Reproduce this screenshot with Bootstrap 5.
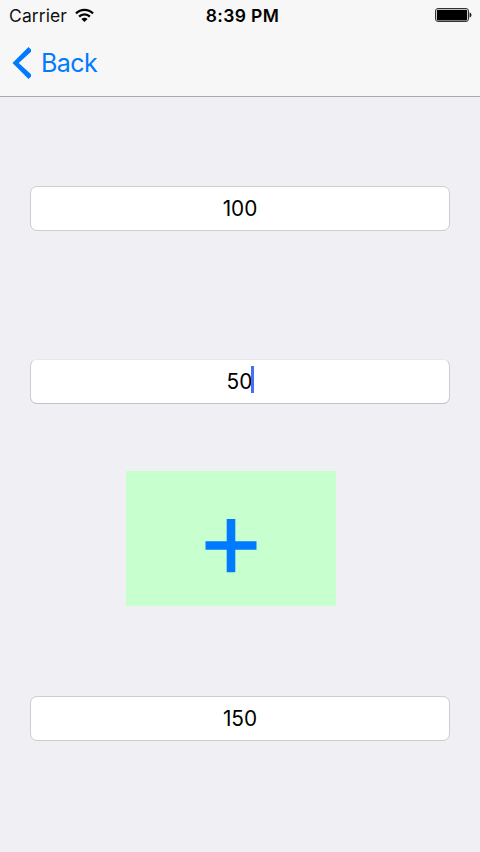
<!DOCTYPE html>
<html lang="en">
<head>
<meta charset="utf-8">
<meta name="viewport" content="width=device-width, initial-scale=1">
<title>Calculator</title>
<link href="https://cdn.jsdelivr.net/npm/bootstrap@5.3.0/dist/css/bootstrap.min.css" rel="stylesheet">
<style>
  body { background: #efeff4; font-family: Inter, "Liberation Sans", sans-serif; color: #000; height: 852px; overflow: hidden; }
  svg { display: block; }
  .top-area { height: 97px; background: #f7f7f7; border-bottom: 1px solid #a9a9ac; }
  .status { height: 30px; font-size: 17px; line-height: 30px; padding: 0 8px 0 9px; }
  .status > div { flex: 1 1 0; }
  .carrier { font-size: 17.5px; letter-spacing: .1px; color: #111; padding-top: 1px; }
  .clock { font-size: 17.5px; font-weight: 600; letter-spacing: .35px; padding: 1px 0 0 4px; }
  .back { height: 66px; padding: 0 12px; color: #007aff; font-size: 25px; letter-spacing: -.6px; line-height: 66px; gap: 9px; }
  .fields { padding: 89px 30px 0; }
  .num-field { height: 45px; padding: 0; border: 1px solid #cdcdcf; border-radius: 7px; background: #fff; font-size: 20.8px; line-height: 43px; color: #000; }
  .gap-first { margin-bottom: 128px; }
  .gap-second { margin-bottom: 67px; padding-left: 1px; border-top-color: #e8e8eb; border-bottom-color: #c2c2c6; }
  .gap-second span:first-child { padding-bottom: 1px; }
  .caret { width: 3px; height: 27px; background: #4a6ef0; margin: 0 0 5px -1px; }
  .add-btn { width: 210px; height: 135px; margin: 0 0 90px 96px; padding: 15px 0 0; background: #c8ffcf; border: 0; border-radius: 0; }
</style>
</head>
<body>
<header class="top-area">
  <div class="status d-flex align-items-center">
    <div class="d-flex align-items-center gap-2">
      <span class="carrier">Carrier</span>
      <svg width="19" height="15" viewBox="0 0 19 15" aria-hidden="true" fill="none" stroke="#000" stroke-width="2.3">
        <path d="M1 5.4C5.8.7 13.2.7 18 5.4M4.1 8.6c3-3 7.8-3 10.8 0"/>
        <path d="M9.5 14 6.4 10.9c1.8-1.6 4.4-1.6 6.2 0z" fill="#000" stroke="none"/>
      </svg>
    </div>
    <div class="clock text-center text-nowrap">8:39 PM</div>
    <div class="d-flex justify-content-end">
      <svg width="37" height="16" viewBox="0 0 37 16" aria-hidden="true">
        <rect x=".5" y="1.5" width="33" height="13" rx="2.5" fill="#fff" stroke="#333"/>
        <rect x="1.8" y="2.8" width="30.4" height="10.7" rx="1" fill="#000"/>
        <path d="M34.5 5.5c2.7.5 2.7 4.5 0 5z" fill="#222"/>
      </svg>
    </div>
  </div>
  <a href="#" class="back d-inline-flex align-items-center text-decoration-none">
    <svg width="20" height="32" viewBox="0 0 20 32" aria-hidden="true" fill="#007aff"><path d="M16.500 0 19 2.500v2.200L6.700 16 19 27.300v2.200L16.500 32 .5 16z"/></svg>
    <span>Back</span>
  </a>
</header>
<main class="fields d-flex flex-column">
  <div class="form-control num-field gap-first text-center" role="textbox">100</div>
  <div class="form-control num-field gap-second d-flex justify-content-center align-items-center" role="textbox"><span>50</span><span class="caret"></span></div>
  <button type="button" class="btn add-btn d-flex align-items-center justify-content-center" aria-label="Add">
    <svg width="52" height="54" viewBox="0 0 52 54" aria-hidden="true" fill="#007aff"><path d="M21.700 0h8.600v22.200H51.500v8.600H30.300v22.500h-8.600V30.800H.5v-8.600h21.200z"/></svg>
  </button>
  <div class="form-control num-field text-center" role="textbox">150</div>
</main>
<script src="https://cdn.jsdelivr.net/npm/bootstrap@5.3.0/dist/js/bootstrap.bundle.min.js"></script>
</body>
</html>
